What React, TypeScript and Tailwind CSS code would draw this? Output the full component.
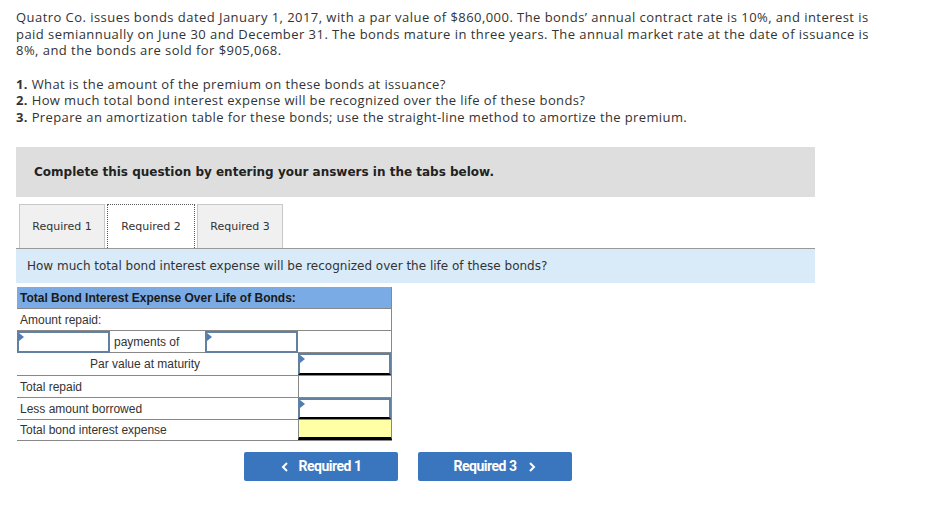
import React from 'react';

const Marker = () => (
  <span className="absolute left-0 top-0 w-0 h-0 border-t-[4px] border-b-[4px] border-l-[5px] border-t-transparent border-b-transparent border-l-[#4f7db5]" />
);

function InputCell({ className = '' }: { className?: string }) {
  return (
    <div className={`relative h-full border-2 border-[#62809f] ${className}`}>
      <Marker />
    </div>
  );
}

export default function App() {
  return (
    <div className="w-[938px] h-[512px] bg-white text-[#333] overflow-hidden" style={{ fontFamily: '"Open Sans", sans-serif' }}>
      {/* Intro */}
      <div className="pl-[16px] pt-[9px] text-[13px] leading-[16.5px] whitespace-nowrap">
        <p className="tracking-[0.45px]">
          Quatro Co. issues bonds dated January 1, 2017, with a par value of $860,000. The bonds’ annual contract rate is 10%, and interest is
          <br />
          paid semiannually on June 30 and December 31. The bonds mature in three years. The annual market rate at the date of issuance is
          <br />
          8%, and the bonds are sold for $905,068.
        </p>
        <div className="mt-[17px] tracking-[0.38px]">
          <p><b>1.</b> What is the amount of the premium on these bonds at issuance?</p>
          <p><b>2.</b> How much total bond interest expense will be recognized over the life of these bonds?</p>
          <p><b>3.</b> Prepare an amortization table for these bonds; use the straight-line method to amortize the premium.</p>
        </div>
      </div>

      {/* Instruction box */}
      <div className="ml-[16px] w-[799px] mt-[22px]" style={{ fontFamily: '"DejaVu Sans", Verdana, sans-serif' }}>
        <div className="h-[50px] bg-[#dedede] flex items-center pl-[18px] text-[12px] font-bold text-[#222]">
          Complete this question by entering your answers in the tabs below.
        </div>

        {/* Tabs */}
        <div className="mt-[7px] flex items-end gap-[2px] pl-[3px] h-[44px] text-[11px] text-[#333]">
          <div className="h-full w-[86px] bg-[#f0f0f0] border border-b-0 border-[#c8c8c8] flex items-center justify-center pt-[2px]">Required 1</div>
          <div className="h-full w-[88px] bg-white border border-dotted border-b-0 border-[#555] flex items-center justify-center pt-[2px]">Required 2</div>
          <div className="h-full w-[86px] bg-[#f0f0f0] border border-b-0 border-[#c8c8c8] flex items-center justify-center pt-[2px]">Required 3</div>
        </div>

        <div className="h-[35px] bg-[#d9ebf9] border-t border-[#999] flex items-center pl-[11px] text-[12px] text-[#333]">
          How much total bond interest expense will be recognized over the life of these bonds?
        </div>
      </div>

      {/* Table */}
      <div className="ml-[17px] mt-[4px] w-[375px] text-[12px] text-[#333]" style={{ fontFamily: '"Liberation Sans", Arial, sans-serif' }}>
        <div className="h-[21px] bg-[#7aabe4] border-r border-[#888] flex items-center pl-[3px] font-bold text-[#1a1a1a]">
          Total Bond Interest Expense Over Life of Bonds:
        </div>
        <div className="h-[22px] border-t border-r border-[#888] flex items-center pl-[3px]">Amount repaid:</div>
        <div className="h-[23px] border-t border-r border-[#888] flex">
          <div className="w-[93px]"><InputCell /></div>
          <div className="w-[95px] border-b border-[#888] flex items-center pl-[4px]">payments of</div>
          <div className="w-[93px]"><InputCell /></div>
          <div className="flex-1 border-b border-[#888]" />
        </div>
        <div className="h-[22px] border-r border-[#888] flex">
          <div className="w-[281px] flex items-center pl-[73px]">Par value at maturity</div>
          <div className="flex-1"><InputCell className="border-b-black" /></div>
        </div>
        <div className="h-[22px] border-t border-r border-[#888] flex">
          <div className="w-[281px] flex items-center pl-[3px]">Total repaid</div>
          <div className="flex-1 border-l border-[#888]" />
        </div>
        <div className="h-[22px] border-t border-r border-[#888] flex">
          <div className="w-[281px] flex items-center pl-[3px]">Less amount borrowed</div>
          <div className="flex-1"><InputCell className="border-b-black" /></div>
        </div>
        <div className="h-[22px] border-t border-b border-[#888] flex">
          <div className="w-[281px] flex items-center pl-[3px]">Total bond interest expense</div>
          <div className="flex-1 bg-[#ffffa6] border-l border-r border-[#888] border-b-[3px] border-b-black" />
        </div>
      </div>

      {/* Nav buttons */}
      <div className="mt-[11px] ml-[244px] flex gap-[20px]" style={{ fontFamily: 'Roboto, sans-serif' }}>
        <button className="w-[154px] h-[29px] bg-[#3a76bd] rounded-[2px] text-white text-[14px] font-bold tracking-[-0.5px] flex items-center justify-center gap-[10px]">
          <svg width="8" height="10" viewBox="0 0 8 10"><path d="M6 1 L2 5 L6 9" stroke="white" strokeWidth="2" fill="none" /></svg>
          Required 1
        </button>
        <button className="w-[154px] h-[29px] bg-[#3a76bd] rounded-[2px] text-white text-[14px] font-bold tracking-[-0.5px] flex items-center justify-center gap-[12px]">
          Required 3
          <svg width="8" height="10" viewBox="0 0 8 10"><path d="M2 1 L6 5 L2 9" stroke="white" strokeWidth="2" fill="none" /></svg>
        </button>
      </div>
    </div>
  );
}
